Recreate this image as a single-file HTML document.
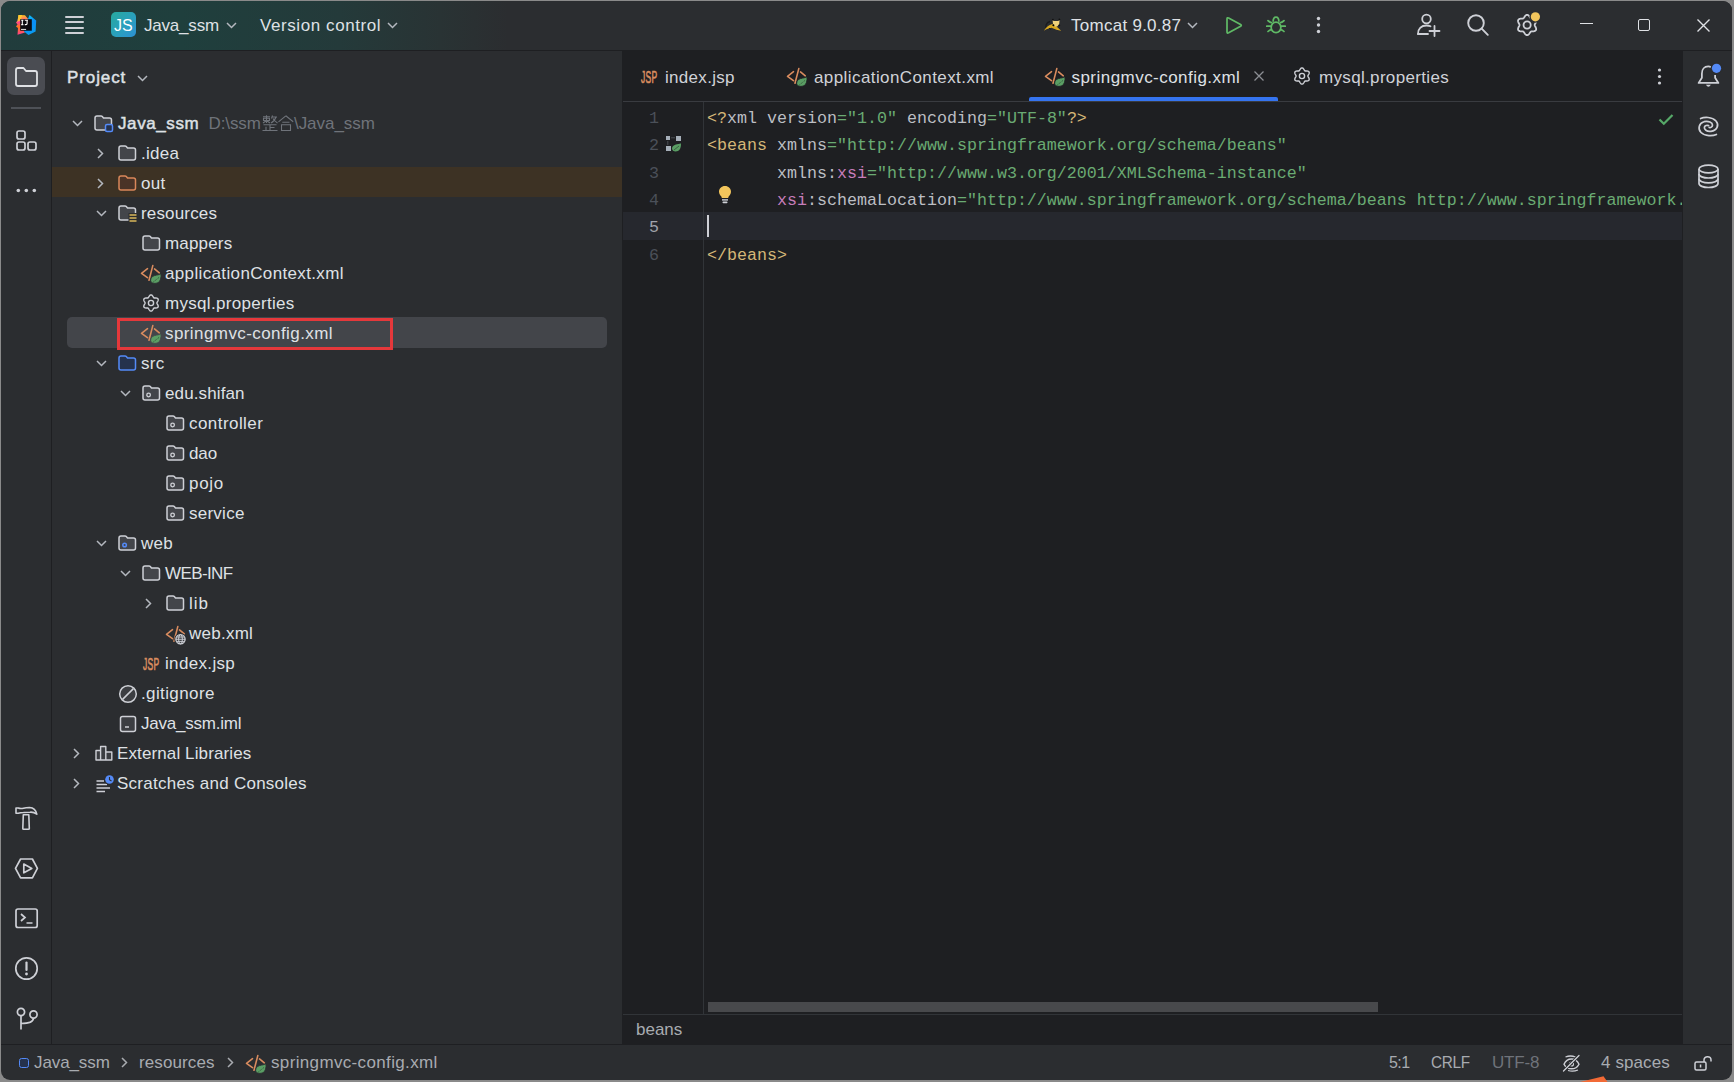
<!DOCTYPE html>
<html><head><meta charset="utf-8">
<style>
*{box-sizing:border-box;margin:0;padding:0}
html,body{width:1734px;height:1082px;overflow:hidden;background:#8a8a8a;font-family:"Liberation Sans",sans-serif;position:relative}
#win{position:absolute;left:0;top:0;width:1734px;height:1082px;background:#2B2D30;clip-path:inset(1px 2px 2px 1px round 9px)}
.r{position:absolute}
.t{position:absolute;white-space:nowrap;color:#DFE1E5;font-size:17px;line-height:20px}
.b{-webkit-text-stroke:0.45px #DFE1E5}
.mono{font-family:"Liberation Mono",monospace}
svg{position:absolute;overflow:visible}
</style></head><body>
<div id="win">
<div class="r" style="left:0;top:0;width:1734px;height:51px;background:linear-gradient(90deg,#213c3c 0px,#1f3f3d 180px,#243a3a 340px,#293334 440px,#2B2D30 508px)"></div>
<div class="r" style="left:0;top:50px;width:1734px;height:1px;background:#1E1F22"></div>
<!-- IJ logo -->
<svg style="left:0;top:0" width="50" height="50">
  <defs>
    <linearGradient id="ijw" x1="0" y1="0" x2="0" y2="1"><stop offset="0" stop-color="#FFC51E"/><stop offset="0.35" stop-color="#FF3C9A"/><stop offset="0.6" stop-color="#FF7A1A"/><stop offset="1" stop-color="#FF3C8C"/></linearGradient>
    <linearGradient id="ijc" x1="0" y1="0" x2="0.3" y2="1"><stop offset="0" stop-color="#10D5F5"/><stop offset="0.5" stop-color="#0A8EF7"/><stop offset="1" stop-color="#0A9BF2"/></linearGradient>
  </defs>
  <polygon points="18.5,15 25,15.2 28.5,19.5 24,31 25,32.5 17.5,34.8 18,28 16,26.5 17.5,24.5 16,22.5 17.5,21" fill="url(#ijw)"/>
  <polygon points="18.5,15 22,15.1 21,20 16,22.5 17.5,21" fill="#FFD030" opacity="0.85"/>
  <polygon points="29.5,15 36.2,20.5 35.6,31.5 28.5,35 24,31.5 28,19" fill="url(#ijc)"/>
  <rect x="20.2" y="19.2" width="11.6" height="11.5" fill="#0B0A10"/>
  <path d="M21.2,20.3 L23.4,20.3 M22.3,20.3 L22.3,24.6 M21.2,24.6 L23.4,24.6 M24.8,20.3 L27.9,20.3 M27.1,20.3 L27.1,23.6 Q27.1,24.6 26,24.6 L24.8,24.6" fill="none" stroke="#FFFFFF" stroke-width="1.1"/>
  <rect x="21" y="28.9" width="5.1" height="1" fill="#E8E8E8"/>
</svg>
<!-- hamburger -->
<div class="r" style="left:65px;top:16px;width:19px;height:2px;background:#CED0D6;border-radius:1px"></div>
<div class="r" style="left:65px;top:21px;width:19px;height:2px;background:#CED0D6;border-radius:1px"></div>
<div class="r" style="left:65px;top:27px;width:19px;height:2px;background:#CED0D6;border-radius:1px"></div>
<div class="r" style="left:65px;top:32px;width:19px;height:2px;background:#CED0D6;border-radius:1px"></div>
<!-- JS badge -->
<div class="r" style="left:111px;top:12px;width:25px;height:25px;border-radius:5px;background:linear-gradient(135deg,#27A99E 0%,#2A9FC0 60%,#2D8FD5 100%)"></div>
<div class="t" style="left:114px;top:16px;font-size:16px;color:#fff;letter-spacing:0px">JS</div>
<div class="t" style="left:144px;top:16px;letter-spacing:-0.2px">Java_ssm</div>
<svg style="left:226px;top:22px" width="11" height="7"><polyline points="1,1 5.5,5.5 10,1" fill="none" stroke="#B4B8BF" stroke-width="1.5"/></svg>
<div class="t" style="left:260px;top:16px;letter-spacing:0.58px">Version control</div>
<svg style="left:387px;top:22px" width="11" height="7"><polyline points="1,1 5.5,5.5 10,1" fill="none" stroke="#B4B8BF" stroke-width="1.5"/></svg>
<!-- tomcat -->
<svg style="left:1038px;top:12px" width="30" height="26">
  <path d="M8.5,17.5 C7,14.5 8,10.5 12,9.5" fill="none" stroke="#1A1B1E" stroke-width="1.3"/>
  <path d="M5.8,18.8 C8,15.5 10.5,13 14.5,12 L17.5,13.5 C19.5,15.5 21.5,17 23.2,18.8 C20,18.5 17,17.3 13.5,15.8 C10.5,16.3 8,17.3 5.8,18.8 Z" fill="#D9A820"/>
  <path d="M11,16.2 L13,17.5" stroke="#1A1B1E" stroke-width="1"/>
  <path d="M14.6,8 L15.8,9 L20.3,9 L21.6,7.8 L21.2,12.3 L19.2,14.6 L17.2,14.6 L15,12.3 Z" fill="#EFD27A"/>
  <circle cx="14.9" cy="7.6" r="0.9" fill="#111"/><circle cx="21.4" cy="7.4" r="0.9" fill="#111"/>
  <circle cx="15.4" cy="13.2" r="1" fill="#000"/><circle cx="21.3" cy="13.4" r="0.9" fill="#111"/>
</svg>
<div class="t" style="left:1071px;top:16px;letter-spacing:0.27px">Tomcat 9.0.87</div>
<svg style="left:1187px;top:22px" width="11" height="7"><polyline points="1,1 5.5,5.5 10,1" fill="none" stroke="#B4B8BF" stroke-width="1.5"/></svg>
<!-- run -->
<svg style="left:1225px;top:16px" width="20" height="20"><path d="M2,3 Q2,1.2 3.6,2 L15.6,8.6 Q17,9.4 15.6,10.2 L3.6,16.8 Q2,17.6 2,15.8 Z" fill="none" stroke="#5FB865" stroke-width="1.75" stroke-linejoin="round"/></svg>
<!-- debug bug -->
<svg style="left:1266px;top:16px" width="20" height="18">
  <path d="M7.1,5.8 C7.1,2.6 8.4,1 10,1 C11.6,1 12.9,2.6 12.9,5.8" fill="none" stroke="#5FB865" stroke-width="1.75"/>
  <ellipse cx="10" cy="11.4" rx="4.85" ry="5.25" fill="none" stroke="#5FB865" stroke-width="1.75"/>
  <path d="M2,4.7 Q3.5,6.2 5.4,6.6 M18,4.7 Q16.5,6.2 14.6,6.6 M0.8,10.2 L5,10.2 M19.2,10.2 L15,10.2 M2,15.5 Q3.5,14 5.4,13.6 M18,15.5 Q16.5,14 14.6,13.6" fill="none" stroke="#5FB865" stroke-width="1.75" stroke-linecap="round"/>
</svg>
<!-- more -->
<svg style="left:1316px;top:16px" width="5" height="18"><circle cx="2.5" cy="2.5" r="1.7" fill="#CED0D6"/><circle cx="2.5" cy="9" r="1.7" fill="#CED0D6"/><circle cx="2.5" cy="15.5" r="1.7" fill="#CED0D6"/></svg>
<!-- add user -->
<svg style="left:1417px;top:13px" width="24" height="24">
  <circle cx="9.5" cy="6" r="4.3" fill="none" stroke="#CED0D6" stroke-width="1.8"/>
  <path d="M1,21 C1,15.5 4.5,12.5 9.5,12.5 C11,12.5 12.5,12.8 13.5,13.3" fill="none" stroke="#CED0D6" stroke-width="1.8" stroke-linecap="round"/>
  <path d="M1,21 L11,21" stroke="#CED0D6" stroke-width="1.8" stroke-linecap="round"/>
  <path d="M17.5,13 L17.5,23 M12.5,18 L22.5,18" stroke="#CED0D6" stroke-width="1.8" stroke-linecap="round"/>
</svg>
<!-- search -->
<svg style="left:1467px;top:14px" width="22" height="22">
  <circle cx="9" cy="9" r="7.8" fill="none" stroke="#CED0D6" stroke-width="1.9"/>
  <path d="M14.7,14.7 L20.8,20.8" stroke="#CED0D6" stroke-width="1.9" stroke-linecap="round"/>
</svg>
<!-- gear w/ dot -->
<svg style="left:1515px;top:13px" width="26" height="26">
  <path d="M19.70,12.00 L19.79,12.54 L20.05,13.12 L20.41,13.77 L20.79,14.49 L21.07,15.27 L21.19,16.05 L21.08,16.78 L20.73,17.39 L20.15,17.85 L19.42,18.14 L18.60,18.28 L17.79,18.32 L17.04,18.33 L16.41,18.39 L15.90,18.58 L15.48,18.93 L15.11,19.45 L14.73,20.08 L14.29,20.77 L13.76,21.40 L13.14,21.90 L12.45,22.17 L11.75,22.17 L11.06,21.90 L10.44,21.40 L9.91,20.77 L9.47,20.08 L9.09,19.45 L8.72,18.93 L8.30,18.58 L7.79,18.39 L7.16,18.33 L6.41,18.32 L5.60,18.28 L4.78,18.14 L4.05,17.85 L3.47,17.39 L3.12,16.78 L3.01,16.05 L3.13,15.27 L3.41,14.49 L3.79,13.77 L4.15,13.12 L4.41,12.54 L4.50,12.00 L4.41,11.46 L4.15,10.88 L3.79,10.23 L3.41,9.51 L3.13,8.73 L3.01,7.95 L3.12,7.22 L3.47,6.61 L4.05,6.15 L4.78,5.86 L5.60,5.72 L6.41,5.68 L7.16,5.67 L7.79,5.61 L8.30,5.42 L8.72,5.07 L9.09,4.55 L9.47,3.92 L9.91,3.23 L10.44,2.60 L11.06,2.10 L11.75,1.83 L12.45,1.83 L13.14,2.10 L13.76,2.60 L14.29,3.23 L14.73,3.92 L15.11,4.55 L15.48,5.07 L15.90,5.42 L16.41,5.61 L17.04,5.67 L17.79,5.68 L18.60,5.72 L19.42,5.86 L20.15,6.15 L20.73,6.61 L21.08,7.22 L21.19,7.95 L21.07,8.73 L20.79,9.51 L20.41,10.23 L20.05,10.88 L19.79,11.46 Z" fill="none" stroke="#CED0D6" stroke-width="1.8" stroke-linejoin="round"/>
  <circle cx="12.1" cy="12" r="3.6" fill="none" stroke="#CED0D6" stroke-width="1.8"/>
  <circle cx="20.4" cy="3.8" r="6" fill="#2B2D30"/>
  <circle cx="20.4" cy="3.8" r="4.6" fill="#F2C55C"/>
</svg>
<!-- window controls -->
<div class="r" style="left:1580px;top:23px;width:13px;height:1.2px;background:#DFE1E5"></div>
<div class="r" style="left:1638px;top:19px;width:12px;height:12px;border:1.4px solid #DFE1E5;border-radius:2px"></div>
<svg style="left:1697px;top:19px" width="13" height="13"><path d="M0.5,0.5 L12.5,12.5 M12.5,0.5 L0.5,12.5" stroke="#DFE1E5" stroke-width="1.4"/></svg>



<div class="r" style="left:51px;top:51px;width:1px;height:993px;background:#1E1F22"></div>
<!-- project button -->
<div class="r" style="left:7px;top:57px;width:38px;height:38px;border-radius:7px;background:#4A4C52"></div>
<svg style="left:15px;top:67px" width="24" height="20"><path d="M1,3 Q1,1 3,1 L8.5,1 L11,4 L20,4 Q22,4 22,6 L22,17 Q22,19 20,19 L3,19 Q1,19 1,17 Z" fill="none" stroke="#DFE1E5" stroke-width="1.8" stroke-linejoin="round"/></svg>
<div class="r" style="left:11px;top:107px;width:30px;height:2px;background:#4E5157"></div>
<!-- structure -->
<svg style="left:16px;top:130px" width="22" height="22">
  <rect x="1" y="1" width="8" height="8" rx="2" fill="none" stroke="#CED0D6" stroke-width="1.7"/>
  <rect x="1" y="12" width="8" height="8" rx="2" fill="none" stroke="#CED0D6" stroke-width="1.7"/>
  <rect x="12" y="12" width="8" height="8" rx="2" fill="none" stroke="#CED0D6" stroke-width="1.7"/>
</svg>
<svg style="left:16px;top:187px" width="22" height="8"><circle cx="2.3" cy="3.5" r="1.8" fill="#CED0D6"/><circle cx="10.3" cy="3.5" r="1.8" fill="#CED0D6"/><circle cx="18.3" cy="3.5" r="1.8" fill="#CED0D6"/></svg>
<!-- hammer -->
<svg style="left:14px;top:806px" width="25" height="25">
  <path d="M2,2 L4.3,2 Q6.5,3 9.5,2.2 Q12,1.5 15.5,1.5 Q21.5,1.8 22.8,8.2 Q19.5,5.8 16,6.2 L9.5,6.5 Q6.5,6.5 4.3,7.3 L2,7.3 Z" fill="none" stroke="#CED0D6" stroke-width="1.6" stroke-linejoin="round"/>
  <path d="M9.3,8.8 L14.8,8.8 L15.3,22.5 Q15.3,23.3 14.5,23.3 L9.6,23.3 Q8.8,23.3 8.8,22.5 Z" fill="none" stroke="#CED0D6" stroke-width="1.6" stroke-linejoin="round"/>
</svg>
<!-- run hex -->
<svg style="left:14px;top:851px" width="26" height="30">
  <path d="M6.6,8 L18.4,8 L23.4,17.4 L18.4,26.8 L6.6,26.8 L1.5,17.4 Z" fill="none" stroke="#CED0D6" stroke-width="1.7" stroke-linejoin="round"/>
  <path d="M9.8,13 L17.8,17.4 L9.8,21.8 Z" fill="none" stroke="#CED0D6" stroke-width="1.7" stroke-linejoin="round"/>
</svg>
<!-- terminal -->
<svg style="left:15px;top:908px" width="25" height="22">
  <rect x="1" y="1" width="21.2" height="18.5" rx="2" fill="none" stroke="#CED0D6" stroke-width="1.7"/>
  <path d="M6,6 L10,9.5 L6,13 M11.5,15 L17.5,15" fill="none" stroke="#CED0D6" stroke-width="1.7"/>
</svg>
<!-- problems -->
<svg style="left:14px;top:957px" width="25" height="24">
  <circle cx="12.5" cy="11.5" r="10.7" fill="none" stroke="#CED0D6" stroke-width="1.7"/>
  <path d="M12.5,5.5 L12.5,13" stroke="#CED0D6" stroke-width="2.2" stroke-linecap="round"/>
  <circle cx="12.5" cy="17" r="1.4" fill="#CED0D6"/>
</svg>
<!-- git -->
<svg style="left:16px;top:1007px" width="24" height="24">
  <circle cx="5" cy="5" r="3.6" fill="none" stroke="#CED0D6" stroke-width="1.7"/>
  <circle cx="17.5" cy="7.5" r="3.6" fill="none" stroke="#CED0D6" stroke-width="1.7"/>
  <path d="M5,8.6 L5,22.5 M5,16.5 Q17.5,16.5 17.5,11.1" fill="none" stroke="#CED0D6" stroke-width="1.7"/>
</svg>



<div class="t b" style="left:67px;top:68px;letter-spacing:0.9px">Project</div>
<svg style="left:137px;top:75px" width="11" height="7"><polyline points="1,1 5.5,5.5 10,1" fill="none" stroke="#B4B8BF" stroke-width="1.5"/></svg>
<div class="r" style="left:52px;top:167px;width:570px;height:30px;background:#3D3224"></div>
<div class="r" style="left:67px;top:317px;width:540px;height:31px;border-radius:5px;background:#43454A"></div>
<svg style="left:72px;top:120px" width="11" height="7"><polyline points="1,1 5.5,5.5 10,1" fill="none" stroke="#B4B8BF" stroke-width="1.5"/></svg>
<svg style="left:94px;top:114px" width="20" height="20"><path d="M1,4 Q1,2 3,2 L7,2 Q7.8,2 8.3,2.6 L9.5,4 L15.5,4 Q17.5,4 17.5,6 L17.5,14 Q17.5,16 15.5,16 L3,16 Q1,16 1,14 Z" fill="#43454A" stroke="#CED0D6" stroke-width="1.5" stroke-linejoin="round"/><rect x="11.5" y="10.5" width="7" height="7" rx="1.5" fill="#25324D" stroke="#548AF7" stroke-width="1.5"/></svg>
<div class="t b" style="left:118px;top:114px;letter-spacing:0.6px">Java_ssm</div>
<div class="t" style="left:208.5px;top:114px;color:#6F737A;letter-spacing:-0.1px">D:\ssm</div>
<svg style="left:262px;top:115px" width="34" height="17"><g fill="none" stroke="#6F737A" stroke-width="1.1"><path d="M1,1.8 L8,1.8 M4.5,0.3 L4.5,8 M1.5,3.2 L7.5,3.2 L7.5,5.5 L1.5,5.5 Z M4.5,5.5 L1,8 M4.5,5.5 L8,8 M10.5,0.5 L9.5,3.5 M10,2 L15,2 M14,2 Q12.5,6.3 9,8 M11,3.5 Q13,6.5 15.5,8 M1.5,9.8 L14.5,9.8 M8,9.8 L8,15.5 M8,12.5 L12.5,12.5 M4,11.8 L4,15.5 M0.5,15.5 L15.5,15.5"/><path d="M23.8,0.8 L16.5,6.8 M23.8,0.8 L31.2,6.8 M20.3,7.3 L27.5,7.3 M19.5,9.8 L28.5,9.8 L28.5,15.5 L19.5,15.5 Z"/></g></svg>
<div class="t" style="left:294px;top:114px;color:#6F737A;letter-spacing:-0.05px">\Java_ssm</div>
<svg style="left:97px;top:148px" width="7" height="11"><polyline points="1,1 5.5,5.5 1,10" fill="none" stroke="#B4B8BF" stroke-width="1.5"/></svg>
<svg style="left:118px;top:144px" width="20" height="20"><path d="M1,4 Q1,2 3,2 L7,2 Q7.8,2 8.3,2.6 L9.5,4 L15.5,4 Q17.5,4 17.5,6 L17.5,14 Q17.5,16 15.5,16 L3,16 Q1,16 1,14 Z" fill="#43454A" stroke="#CED0D6" stroke-width="1.5" stroke-linejoin="round"/></svg>
<div class="t" style="left:141px;top:144px;letter-spacing:0.25px">.idea</div>
<svg style="left:97px;top:178px" width="7" height="11"><polyline points="1,1 5.5,5.5 1,10" fill="none" stroke="#B4B8BF" stroke-width="1.5"/></svg>
<svg style="left:118px;top:174px" width="20" height="20"><path d="M1,4 Q1,2 3,2 L7,2 Q7.8,2 8.3,2.6 L9.5,4 L15.5,4 Q17.5,4 17.5,6 L17.5,14 Q17.5,16 15.5,16 L3,16 Q1,16 1,14 Z" fill="#4A3327" stroke="#D9875A" stroke-width="1.5" stroke-linejoin="round"/></svg>
<div class="t" style="left:141px;top:174px;letter-spacing:0.25px">out</div>
<svg style="left:96px;top:210px" width="11" height="7"><polyline points="1,1 5.5,5.5 10,1" fill="none" stroke="#B4B8BF" stroke-width="1.5"/></svg>
<svg style="left:118px;top:204px" width="20" height="20"><path d="M1,4 Q1,2 3,2 L7,2 Q7.8,2 8.3,2.6 L9.5,4 L15.5,4 Q17.5,4 17.5,6 L17.5,14 Q17.5,16 15.5,16 L3,16 Q1,16 1,14 Z" fill="#43454A" stroke="#CED0D6" stroke-width="1.5" stroke-linejoin="round"/><rect x="10.5" y="9" width="9" height="9" fill="#2B2D30"/><path d="M11.5,11 L18.5,11 M11.5,14 L18.5,14 M11.5,17 L18.5,17" stroke="#D9B659" stroke-width="1.5"/></svg>
<div class="t" style="left:141px;top:204px;letter-spacing:0.163px">resources</div>
<svg style="left:142px;top:234px" width="20" height="20"><path d="M1,4 Q1,2 3,2 L7,2 Q7.8,2 8.3,2.6 L9.5,4 L15.5,4 Q17.5,4 17.5,6 L17.5,14 Q17.5,16 15.5,16 L3,16 Q1,16 1,14 Z" fill="#43454A" stroke="#CED0D6" stroke-width="1.5" stroke-linejoin="round"/></svg>
<div class="t" style="left:165px;top:234px;letter-spacing:0.167px">mappers</div>
<svg style="left:140px;top:265px" width="22" height="20"><path d="M7.5,3.7 L1.5,8.3 L7.5,12.6 M12.8,0.6 L9,15.3 M14.5,3.9 L19.3,7.8" fill="none" stroke="#D98C5F" stroke-width="1.6" stroke-linecap="round" stroke-linejoin="round"/><path d="M10.6,15.2 C10.6,11.8 13.5,10.6 16.5,10.1 C18.6,9.8 20.2,9.2 21,8.8 C21.3,12.5 20.6,16.4 18,17.7 C15.3,18.9 10.6,18.6 10.6,15.2 Z" fill="#5A9E64" stroke="#2B2D30" stroke-width="0.9"/><path d="M13.3,17 L19.2,12.3" stroke="#2E4A33" stroke-width="0.8" stroke-dasharray="1.2,0.8"/></svg>
<div class="t" style="left:165px;top:264px;letter-spacing:0.355px">applicationContext.xml</div>
<svg style="left:140px;top:292px" width="22" height="22"><path d="M16.90,11.00 L16.98,11.42 L17.20,11.87 L17.51,12.38 L17.84,12.96 L18.09,13.58 L18.21,14.21 L18.13,14.79 L17.85,15.28 L17.38,15.64 L16.78,15.85 L16.12,15.94 L15.46,15.95 L14.86,15.94 L14.35,15.97 L13.95,16.11 L13.63,16.39 L13.35,16.81 L13.06,17.33 L12.72,17.90 L12.31,18.44 L11.82,18.85 L11.28,19.07 L10.72,19.07 L10.18,18.85 L9.69,18.44 L9.28,17.90 L8.94,17.33 L8.65,16.81 L8.37,16.39 L8.05,16.11 L7.65,15.97 L7.14,15.94 L6.54,15.95 L5.88,15.94 L5.22,15.85 L4.62,15.64 L4.15,15.28 L3.87,14.79 L3.79,14.21 L3.91,13.58 L4.16,12.96 L4.49,12.38 L4.80,11.87 L5.02,11.42 L5.10,11.00 L5.02,10.58 L4.80,10.13 L4.49,9.62 L4.16,9.04 L3.91,8.42 L3.79,7.79 L3.87,7.21 L4.15,6.72 L4.62,6.36 L5.22,6.15 L5.88,6.06 L6.54,6.05 L7.14,6.06 L7.65,6.03 L8.05,5.89 L8.37,5.61 L8.65,5.19 L8.94,4.67 L9.28,4.10 L9.69,3.56 L10.18,3.15 L10.72,2.93 L11.28,2.93 L11.82,3.15 L12.31,3.56 L12.72,4.10 L13.06,4.67 L13.35,5.19 L13.63,5.61 L13.95,5.89 L14.35,6.03 L14.86,6.06 L15.46,6.05 L16.12,6.06 L16.78,6.15 L17.38,6.36 L17.85,6.72 L18.13,7.21 L18.21,7.79 L18.09,8.42 L17.84,9.04 L17.51,9.62 L17.20,10.13 L16.98,10.58 Z" fill="none" stroke="#CED0D6" stroke-width="1.4" stroke-linejoin="round"/><circle cx="11" cy="11" r="2.6" fill="none" stroke="#CED0D6" stroke-width="1.4"/></svg>
<div class="t" style="left:165px;top:294px;letter-spacing:0.31px">mysql.properties</div>
<svg style="left:140px;top:325px" width="22" height="20"><path d="M7.5,3.7 L1.5,8.3 L7.5,12.6 M12.8,0.6 L9,15.3 M14.5,3.9 L19.3,7.8" fill="none" stroke="#D98C5F" stroke-width="1.6" stroke-linecap="round" stroke-linejoin="round"/><path d="M10.6,15.2 C10.6,11.8 13.5,10.6 16.5,10.1 C18.6,9.8 20.2,9.2 21,8.8 C21.3,12.5 20.6,16.4 18,17.7 C15.3,18.9 10.6,18.6 10.6,15.2 Z" fill="#5A9E64" stroke="#43454A" stroke-width="0.9"/><path d="M13.3,17 L19.2,12.3" stroke="#2E4A33" stroke-width="0.8" stroke-dasharray="1.2,0.8"/></svg>
<div class="t" style="left:165px;top:324px;letter-spacing:0.418px">springmvc-config.xml</div>
<svg style="left:96px;top:360px" width="11" height="7"><polyline points="1,1 5.5,5.5 10,1" fill="none" stroke="#B4B8BF" stroke-width="1.5"/></svg>
<svg style="left:118px;top:354px" width="20" height="20"><path d="M1,4 Q1,2 3,2 L7,2 Q7.8,2 8.3,2.6 L9.5,4 L15.5,4 Q17.5,4 17.5,6 L17.5,14 Q17.5,16 15.5,16 L3,16 Q1,16 1,14 Z" fill="#25324D" stroke="#548AF7" stroke-width="1.5" stroke-linejoin="round"/></svg>
<div class="t" style="left:141px;top:354px;letter-spacing:0.25px">src</div>
<svg style="left:120px;top:390px" width="11" height="7"><polyline points="1,1 5.5,5.5 10,1" fill="none" stroke="#B4B8BF" stroke-width="1.5"/></svg>
<svg style="left:142px;top:384px" width="20" height="20"><path d="M1,4 Q1,2 3,2 L7,2 Q7.8,2 8.3,2.6 L9.5,4 L15.5,4 Q17.5,4 17.5,6 L17.5,14 Q17.5,16 15.5,16 L3,16 Q1,16 1,14 Z" fill="#43454A" stroke="#CED0D6" stroke-width="1.5" stroke-linejoin="round"/><circle cx="6.6" cy="11" r="1.8" fill="none" stroke="#CED0D6" stroke-width="1.3"/></svg>
<div class="t" style="left:165px;top:384px;letter-spacing:0.117px">edu.shifan</div>
<svg style="left:166px;top:414px" width="20" height="20"><path d="M1,4 Q1,2 3,2 L7,2 Q7.8,2 8.3,2.6 L9.5,4 L15.5,4 Q17.5,4 17.5,6 L17.5,14 Q17.5,16 15.5,16 L3,16 Q1,16 1,14 Z" fill="#43454A" stroke="#CED0D6" stroke-width="1.5" stroke-linejoin="round"/><circle cx="6.6" cy="11" r="1.8" fill="none" stroke="#CED0D6" stroke-width="1.3"/></svg>
<div class="t" style="left:189px;top:414px;letter-spacing:0.439px">controller</div>
<svg style="left:166px;top:444px" width="20" height="20"><path d="M1,4 Q1,2 3,2 L7,2 Q7.8,2 8.3,2.6 L9.5,4 L15.5,4 Q17.5,4 17.5,6 L17.5,14 Q17.5,16 15.5,16 L3,16 Q1,16 1,14 Z" fill="#43454A" stroke="#CED0D6" stroke-width="1.5" stroke-linejoin="round"/><circle cx="6.6" cy="11" r="1.8" fill="none" stroke="#CED0D6" stroke-width="1.3"/></svg>
<div class="t" style="left:189px;top:444px;letter-spacing:-0.1px">dao</div>
<svg style="left:166px;top:474px" width="20" height="20"><path d="M1,4 Q1,2 3,2 L7,2 Q7.8,2 8.3,2.6 L9.5,4 L15.5,4 Q17.5,4 17.5,6 L17.5,14 Q17.5,16 15.5,16 L3,16 Q1,16 1,14 Z" fill="#43454A" stroke="#CED0D6" stroke-width="1.5" stroke-linejoin="round"/><circle cx="6.6" cy="11" r="1.8" fill="none" stroke="#CED0D6" stroke-width="1.3"/></svg>
<div class="t" style="left:189px;top:474px;letter-spacing:0.717px">pojo</div>
<svg style="left:166px;top:504px" width="20" height="20"><path d="M1,4 Q1,2 3,2 L7,2 Q7.8,2 8.3,2.6 L9.5,4 L15.5,4 Q17.5,4 17.5,6 L17.5,14 Q17.5,16 15.5,16 L3,16 Q1,16 1,14 Z" fill="#43454A" stroke="#CED0D6" stroke-width="1.5" stroke-linejoin="round"/><circle cx="6.6" cy="11" r="1.8" fill="none" stroke="#CED0D6" stroke-width="1.3"/></svg>
<div class="t" style="left:189px;top:504px;letter-spacing:0.25px">service</div>
<svg style="left:96px;top:540px" width="11" height="7"><polyline points="1,1 5.5,5.5 10,1" fill="none" stroke="#B4B8BF" stroke-width="1.5"/></svg>
<svg style="left:118px;top:534px" width="20" height="20"><path d="M1,4 Q1,2 3,2 L7,2 Q7.8,2 8.3,2.6 L9.5,4 L15.5,4 Q17.5,4 17.5,6 L17.5,14 Q17.5,16 15.5,16 L3,16 Q1,16 1,14 Z" fill="#43454A" stroke="#CED0D6" stroke-width="1.5" stroke-linejoin="round"/><circle cx="6.6" cy="11" r="1.8" fill="none" stroke="#548AF7" stroke-width="1.5"/></svg>
<div class="t" style="left:141px;top:534px;letter-spacing:0.25px">web</div>
<svg style="left:120px;top:570px" width="11" height="7"><polyline points="1,1 5.5,5.5 10,1" fill="none" stroke="#B4B8BF" stroke-width="1.5"/></svg>
<svg style="left:142px;top:564px" width="20" height="20"><path d="M1,4 Q1,2 3,2 L7,2 Q7.8,2 8.3,2.6 L9.5,4 L15.5,4 Q17.5,4 17.5,6 L17.5,14 Q17.5,16 15.5,16 L3,16 Q1,16 1,14 Z" fill="#43454A" stroke="#CED0D6" stroke-width="1.5" stroke-linejoin="round"/></svg>
<div class="t" style="left:165px;top:564px;letter-spacing:-0.6px">WEB-INF</div>
<svg style="left:145px;top:598px" width="7" height="11"><polyline points="1,1 5.5,5.5 1,10" fill="none" stroke="#B4B8BF" stroke-width="1.5"/></svg>
<svg style="left:166px;top:594px" width="20" height="20"><path d="M1,4 Q1,2 3,2 L7,2 Q7.8,2 8.3,2.6 L9.5,4 L15.5,4 Q17.5,4 17.5,6 L17.5,14 Q17.5,16 15.5,16 L3,16 Q1,16 1,14 Z" fill="#43454A" stroke="#CED0D6" stroke-width="1.5" stroke-linejoin="round"/></svg>
<div class="t" style="left:189px;top:594px;letter-spacing:0.95px">lib</div>
<svg style="left:164.5px;top:625.5px" width="20" height="20"><path d="M7.5,3.7 L1.5,8.3 L7.5,12.6 M12.8,0.6 L9,15.3 M14.5,3.9 L19.3,7.8" fill="none" stroke="#D98C5F" stroke-width="1.6" stroke-linecap="round" stroke-linejoin="round"/><circle cx="15.5" cy="13.3" r="5.6" fill="#3C3E42" stroke="#2B2D30" stroke-width="1.2"/><circle cx="15.5" cy="13.3" r="4.6" fill="none" stroke="#CED0D6" stroke-width="1.3"/><path d="M11,13.3 L20,13.3 M11.8,11 L19.2,11 M11.8,15.6 L19.2,15.6" stroke="#CED0D6" stroke-width="0.9"/><ellipse cx="15.5" cy="13.3" rx="1.9" ry="4.6" fill="none" stroke="#CED0D6" stroke-width="1"/></svg>
<div class="t" style="left:189px;top:624px;letter-spacing:0.25px">web.xml</div>
<svg style="left:142.5px;top:658px" width="16" height="13"><text x="0" y="11.5" font-family="Liberation Sans" font-size="16" fill="#D98C5F" stroke="#D98C5F" stroke-width="0.7" transform="scale(0.53,1)" letter-spacing="0.5">JSP</text></svg>
<div class="t" style="left:165px;top:654px;letter-spacing:0.338px">index.jsp</div>
<svg style="left:118px;top:684px" width="20" height="20"><circle cx="10" cy="10" r="8.3" fill="#3C3E42" stroke="#CED0D6" stroke-width="1.5"/><path d="M4.6,15.4 L15.4,4.6" stroke="#CED0D6" stroke-width="1.5"/></svg>
<div class="t" style="left:141px;top:684px;letter-spacing:0.383px">.gitignore</div>
<svg style="left:118px;top:714px" width="20" height="20"><rect x="2.5" y="2.5" width="15" height="15" rx="2" fill="#3C3E42" stroke="#CED0D6" stroke-width="1.5"/><path d="M7,13 L11,13" stroke="#CED0D6" stroke-width="1.5"/></svg>
<div class="t" style="left:141px;top:714px;letter-spacing:-0.223px">Java_ssm.iml</div>
<svg style="left:73px;top:748px" width="7" height="11"><polyline points="1,1 5.5,5.5 1,10" fill="none" stroke="#B4B8BF" stroke-width="1.5"/></svg>
<svg style="left:94px;top:744px" width="20" height="20"><path d="M2,6.5 L6.6,6.5 L6.6,16 L2,16 Z M6.6,2.5 L11.8,2.5 L11.8,16 L6.6,16 Z M11.8,8 L17.8,8 L17.8,16 L11.8,16 Z" fill="#3C3E42" stroke="#CED0D6" stroke-width="1.4" stroke-linejoin="round"/></svg>
<div class="t" style="left:117px;top:744px;letter-spacing:0.115px">External Libraries</div>
<svg style="left:73px;top:778px" width="7" height="11"><polyline points="1,1 5.5,5.5 1,10" fill="none" stroke="#B4B8BF" stroke-width="1.5"/></svg>
<svg style="left:94px;top:774px" width="20" height="20"><path d="M2.5,7 L10,7 M2.5,10.5 L13,10.5 M2.5,14 L16,14 M2.5,17.5 L11,17.5" stroke="#CED0D6" stroke-width="1.4"/><circle cx="15.5" cy="5.5" r="5.3" fill="#2B2D30"/><circle cx="15.5" cy="5.5" r="4.3" fill="#548AF7"/><path d="M15.5,3 L15.5,5.8 L17.5,7" stroke="#2B2D30" stroke-width="1.1" fill="none"/></svg>
<div class="t" style="left:117px;top:774px;letter-spacing:0.25px">Scratches and Consoles</div>
<div class="r" style="left:117px;top:318px;width:276px;height:32px;border:3px solid #E5383B"></div>
<div class="r" style="left:622px;top:51px;width:1061px;height:993px;background:#1E1F22"></div>
<div class="r" style="left:623px;top:101px;width:1059px;height:1px;background:#393B40"></div>
<svg style="left:641px;top:71px" width="16" height="13"><text x="0" y="11.5" font-family="Liberation Sans" font-size="16" fill="#D98C5F" stroke="#D98C5F" stroke-width="0.7" transform="scale(0.53,1)" letter-spacing="0.5">JSP</text></svg>
<div class="t" style="left:665px;top:68px;letter-spacing:0.3px;color:#D0D2D7">index.jsp</div>
<svg style="left:786px;top:67.5px" width="22" height="20"><path d="M7.5,3.7 L1.5,8.3 L7.5,12.6 M12.8,0.6 L9,15.3 M14.5,3.9 L19.3,7.8" fill="none" stroke="#D98C5F" stroke-width="1.6" stroke-linecap="round" stroke-linejoin="round"/><path d="M10.6,15.2 C10.6,11.8 13.5,10.6 16.5,10.1 C18.6,9.8 20.2,9.2 21,8.8 C21.3,12.5 20.6,16.4 18,17.7 C15.3,18.9 10.6,18.6 10.6,15.2 Z" fill="#5A9E64" stroke="#1E1F22" stroke-width="0.9"/><path d="M13.3,17 L19.2,12.3" stroke="#2E4A33" stroke-width="0.8" stroke-dasharray="1.2,0.8"/></svg>
<div class="t" style="left:814px;top:68px;letter-spacing:0.41px;color:#D0D2D7">applicationContext.xml</div>
<svg style="left:1044px;top:67.5px" width="22" height="20"><path d="M7.5,3.7 L1.5,8.3 L7.5,12.6 M12.8,0.6 L9,15.3 M14.5,3.9 L19.3,7.8" fill="none" stroke="#D98C5F" stroke-width="1.6" stroke-linecap="round" stroke-linejoin="round"/><path d="M10.6,15.2 C10.6,11.8 13.5,10.6 16.5,10.1 C18.6,9.8 20.2,9.2 21,8.8 C21.3,12.5 20.6,16.4 18,17.7 C15.3,18.9 10.6,18.6 10.6,15.2 Z" fill="#5A9E64" stroke="#1E1F22" stroke-width="0.9"/><path d="M13.3,17 L19.2,12.3" stroke="#2E4A33" stroke-width="0.8" stroke-dasharray="1.2,0.8"/></svg>
<div class="t" style="left:1071.5px;top:68px;letter-spacing:0.46px">springmvc-config.xml</div>
<svg style="left:1254px;top:71px" width="10" height="10"><path d="M0.5,0.5 L9.5,9.5 M9.5,0.5 L0.5,9.5" stroke="#8C8F94" stroke-width="1.3"/></svg>
<div class="r" style="left:1029px;top:97px;width:249px;height:4px;background:#3574F0;border-radius:2px 2px 0 0"></div>
<svg style="left:1291.1px;top:65.3px" width="22" height="22"><path d="M16.90,11.00 L16.98,11.42 L17.20,11.87 L17.51,12.38 L17.84,12.96 L18.09,13.58 L18.21,14.21 L18.13,14.79 L17.85,15.28 L17.38,15.64 L16.78,15.85 L16.12,15.94 L15.46,15.95 L14.86,15.94 L14.35,15.97 L13.95,16.11 L13.63,16.39 L13.35,16.81 L13.06,17.33 L12.72,17.90 L12.31,18.44 L11.82,18.85 L11.28,19.07 L10.72,19.07 L10.18,18.85 L9.69,18.44 L9.28,17.90 L8.94,17.33 L8.65,16.81 L8.37,16.39 L8.05,16.11 L7.65,15.97 L7.14,15.94 L6.54,15.95 L5.88,15.94 L5.22,15.85 L4.62,15.64 L4.15,15.28 L3.87,14.79 L3.79,14.21 L3.91,13.58 L4.16,12.96 L4.49,12.38 L4.80,11.87 L5.02,11.42 L5.10,11.00 L5.02,10.58 L4.80,10.13 L4.49,9.62 L4.16,9.04 L3.91,8.42 L3.79,7.79 L3.87,7.21 L4.15,6.72 L4.62,6.36 L5.22,6.15 L5.88,6.06 L6.54,6.05 L7.14,6.06 L7.65,6.03 L8.05,5.89 L8.37,5.61 L8.65,5.19 L8.94,4.67 L9.28,4.10 L9.69,3.56 L10.18,3.15 L10.72,2.93 L11.28,2.93 L11.82,3.15 L12.31,3.56 L12.72,4.10 L13.06,4.67 L13.35,5.19 L13.63,5.61 L13.95,5.89 L14.35,6.03 L14.86,6.06 L15.46,6.05 L16.12,6.06 L16.78,6.15 L17.38,6.36 L17.85,6.72 L18.13,7.21 L18.21,7.79 L18.09,8.42 L17.84,9.04 L17.51,9.62 L17.20,10.13 L16.98,10.58 Z" fill="none" stroke="#CED0D6" stroke-width="1.4" stroke-linejoin="round"/><circle cx="11" cy="11" r="2.6" fill="none" stroke="#CED0D6" stroke-width="1.4"/></svg>
<div class="t" style="left:1319px;top:68px;letter-spacing:0.33px;color:#D0D2D7">mysql.properties</div>
<svg style="left:1657px;top:68px" width="5" height="17"><circle cx="2.5" cy="2" r="1.6" fill="#CED0D6"/><circle cx="2.5" cy="8.5" r="1.6" fill="#CED0D6"/><circle cx="2.5" cy="15" r="1.6" fill="#CED0D6"/></svg>
<div class="r" style="left:623px;top:212px;width:1059px;height:28px;background:#26282E"></div>
<div class="r" style="left:703px;top:102px;width:1px;height:912px;background:#313438"></div>
<div class="t mono" style="left:609px;width:50px;text-align:right;top:108.8px;font-size:16.67px;color:#4B5059">1</div>
<div class="t mono" style="left:707px;top:108.8px;font-size:16.67px;white-space:pre;width:975px;overflow:hidden"><span style="color:#D5B778">&lt;?</span><span style="color:#BCBEC4">xml version</span><span style="color:#6AAB73">="1.0"</span><span style="color:#BCBEC4"> encoding</span><span style="color:#6AAB73">="UTF-8"</span><span style="color:#D5B778">?&gt;</span></div>
<div class="t mono" style="left:609px;width:50px;text-align:right;top:136.2px;font-size:16.67px;color:#4B5059">2</div>
<div class="t mono" style="left:707px;top:136.2px;font-size:16.67px;white-space:pre;width:975px;overflow:hidden"><span style="color:#D5B778">&lt;beans</span><span style="color:#BCBEC4"> xmlns</span><span style="color:#6AAB73">="http://www.springframework.org/schema/beans"</span></div>
<div class="t mono" style="left:609px;width:50px;text-align:right;top:163.6px;font-size:16.67px;color:#4B5059">3</div>
<div class="t mono" style="left:707px;top:163.6px;font-size:16.67px;white-space:pre;width:975px;overflow:hidden"><span style="color:#BCBEC4">       xmlns:</span><span style="color:#C77DBB">xsi</span><span style="color:#6AAB73">="http://www.w3.org/2001/XMLSchema-instance"</span></div>
<div class="t mono" style="left:609px;width:50px;text-align:right;top:191.0px;font-size:16.67px;color:#4B5059">4</div>
<div class="t mono" style="left:707px;top:191.0px;font-size:16.67px;white-space:pre;width:975px;overflow:hidden"><span style="color:#BCBEC4">       </span><span style="color:#C77DBB">xsi</span><span style="color:#BCBEC4">:schemaLocation</span><span style="color:#6AAB73">="http://www.springframework.org/schema/beans http://www.springframework.org/schema/beans/spring-beans.xsd"</span><span style="color:#D5B778">&gt;</span></div>
<div class="t mono" style="left:609px;width:50px;text-align:right;top:218.4px;font-size:16.67px;color:#A1A3AB">5</div>
<div class="t mono" style="left:609px;width:50px;text-align:right;top:245.8px;font-size:16.67px;color:#4B5059">6</div>
<div class="t mono" style="left:707px;top:245.8px;font-size:16.67px;white-space:pre;width:975px;overflow:hidden"><span style="color:#D5B778">&lt;/beans&gt;</span></div>
<div class="r" style="left:707px;top:215px;width:2px;height:22px;background:#CED0D6"></div>
<svg style="left:665px;top:135px" width="17" height="17"><rect x="1" y="1" width="4" height="4" fill="#A6AFB9"/><rect x="11" y="1" width="5" height="5" fill="#A6AFB9"/><rect x="1" y="11" width="5" height="5" fill="#A6AFB9"/><path d="M6.5,2.8 L10,2.8 M2.8,6.5 L2.8,10" stroke="#7F8790" stroke-width="0.9" stroke-dasharray="1,1"/><path d="M7,13.5 C7,11 9.5,9.8 12,9.2 C14,8.8 15.5,8.6 16,8.5 C16.2,12 15,15 13,16 C10.5,16.8 7,16.5 7,13.5 Z" fill="#5A9E64"/><path d="M9,15 L14,11" stroke="#2E4A33" stroke-width="0.7"/></svg>
<svg style="left:718px;top:185px" width="14" height="20"><path d="M7,1 C3.5,1 1,3.5 1,6.8 C1,9 2.3,10.5 3.5,11.8 L3.8,13 L10.2,13 L10.5,11.8 C11.7,10.5 13,9 13,6.8 C13,3.5 10.5,1 7,1 Z" fill="#F2C55C"/><rect x="4" y="14.2" width="6" height="1.4" fill="#CED0D6"/><rect x="4.5" y="16.6" width="5" height="1.6" rx="0.8" fill="#CED0D6"/></svg>
<svg style="left:1658px;top:113px" width="16" height="13"><path d="M1.5,6.5 L5.8,10.8 L14.5,2" fill="none" stroke="#56A868" stroke-width="2.2"/></svg>
<div class="r" style="left:708px;top:1002px;width:670px;height:10px;background:#48494C"></div>
<div class="r" style="left:623px;top:1014px;width:1059px;height:1px;background:#313438"></div>
<div class="t" style="left:636px;top:1020px;color:#A8ABB0">beans</div>
<div class="r" style="left:1682px;top:51px;width:1px;height:993px;background:#1E1F22"></div>
<!-- bell -->
<svg style="left:1697px;top:64px" width="26" height="26">
  <path d="M14,3.2 Q12.8,2.4 11.2,2.4 C7.5,2.4 4.9,5.2 4.9,9.5 L4.9,13.8 L1.6,18.9 L21.4,18.9 L18.1,13.8 L18.1,11" fill="none" stroke="#CED0D6" stroke-width="1.75" stroke-linejoin="round"/>
  <path d="M8.9,20.8 Q11.4,24.6 13.9,20.8 Z" fill="#CED0D6"/>
  <circle cx="19.5" cy="4.3" r="5.9" fill="#2B2D30"/>
  <circle cx="19.5" cy="4.3" r="4.6" fill="#548AF7"/>
</svg>
<!-- AI spiral -->
<svg style="left:1696px;top:114px" width="26" height="26">
  <path d="M4.6,4.6 C8,3 16,2.5 20,7 C23.5,11 21,16.5 15,17.3 C10.5,17.8 8,15.5 8.4,13.2 C8.8,11.5 11,11 12.6,11.6" fill="none" stroke="#CED0D6" stroke-width="1.7" stroke-linecap="round"/>
  <path d="M20.4,20.4 C17,22 9,22.5 5,18.5 C1.5,15 3,9 8,7.7 C12.5,6.8 16.5,8.5 16.5,11 C16.5,13 14.5,13.8 13.2,13.5" fill="none" stroke="#CED0D6" stroke-width="1.7" stroke-linecap="round"/>
</svg>
<!-- database -->
<svg style="left:1697px;top:164px" width="24" height="26">
  <ellipse cx="11.5" cy="5" rx="9.5" ry="3.8" fill="none" stroke="#CED0D6" stroke-width="1.7"/>
  <path d="M2,5 L2,19.5 C2,21.8 6.3,23.5 11.5,23.5 C16.7,23.5 21,21.8 21,19.5 L21,5" fill="none" stroke="#CED0D6" stroke-width="1.7"/>
  <path d="M2,10 C2,12.3 6.3,14 11.5,14 C16.7,14 21,12.3 21,10 M2,14.8 C2,17.1 6.3,18.8 11.5,18.8 C16.7,18.8 21,17.1 21,14.8" fill="none" stroke="#CED0D6" stroke-width="1.7"/>
</svg>

<div class="r" style="left:0;top:1044px;width:1734px;height:1px;background:#1E1F22"></div>
<div class="r" style="left:19px;top:1058px;width:10px;height:10px;border:1.6px solid #548AF7;border-radius:2.5px;background:#25324D"></div>
<div class="t" style="left:34px;top:1053px;color:#A8ABB0;letter-spacing:-0.1px">Java_ssm</div>
<svg style="left:121px;top:1057px" width="7" height="11"><polyline points="1,1 5.5,5.5 1,10" fill="none" stroke="#A8ABB0" stroke-width="1.5"/></svg>
<div class="t" style="left:139px;top:1053px;color:#A8ABB0;letter-spacing:0.1px">resources</div>
<svg style="left:227px;top:1057px" width="7" height="11"><polyline points="1,1 5.5,5.5 1,10" fill="none" stroke="#A8ABB0" stroke-width="1.5"/></svg>
<svg style="left:245px;top:1055px" width="22" height="20"><path d="M7.5,3.7 L1.5,8.3 L7.5,12.6 M12.8,0.6 L9,15.3 M14.5,3.9 L19.3,7.8" fill="none" stroke="#D98C5F" stroke-width="1.6" stroke-linecap="round" stroke-linejoin="round"/><path d="M10.6,15.2 C10.6,11.8 13.5,10.6 16.5,10.1 C18.6,9.8 20.2,9.2 21,8.8 C21.3,12.5 20.6,16.4 18,17.7 C15.3,18.9 10.6,18.6 10.6,15.2 Z" fill="#5A9E64" stroke="#2B2D30" stroke-width="0.9"/><path d="M13.3,17 L19.2,12.3" stroke="#2E4A33" stroke-width="0.8" stroke-dasharray="1.2,0.8"/></svg>
<div class="t" style="left:271px;top:1053px;color:#A8ABB0;letter-spacing:0.35px">springmvc-config.xml</div>
<div class="t" style="left:1389px;top:1053px;color:#A8ABB0;letter-spacing:-0.6px;transform:scaleX(0.94);transform-origin:0 0">5:1</div>
<div class="t" style="left:1431px;top:1053px;color:#A8ABB0;letter-spacing:-0.3px;transform:scaleX(0.9);transform-origin:0 0">CRLF</div>
<div class="t" style="left:1492px;top:1053px;color:#6F737A;letter-spacing:-0.2px">UTF-8</div>
<svg style="left:1562px;top:1054px" width="19" height="18">
  <path d="M2,10.2 C3.5,6.8 6,5 9.5,5 C13,5 15.5,6.8 17,10.2 C15.5,13.2 13,14.8 9.5,14.8 C6,14.8 3.5,13.2 2,10.2 Z" fill="none" stroke="#CED0D6" stroke-width="1.4"/>
  <circle cx="9.5" cy="10" r="2" fill="none" stroke="#CED0D6" stroke-width="1.2"/>
  <path d="M3.5,3 Q8.5,1 13.5,3 M6,16.5 Q11,18 16,16" fill="none" stroke="#CED0D6" stroke-width="1.3"/>
  <path d="M1.5,17 L17,1.5" stroke="#2B2D30" stroke-width="3"/><path d="M1.5,17 L17,1.5" stroke="#CED0D6" stroke-width="1.3" stroke-linecap="round"/>
</svg>
<div class="t" style="left:1601px;top:1053px;color:#A8ABB0;letter-spacing:0.1px">4 spaces</div>
<svg style="left:1694px;top:1056px" width="18" height="15">
  <rect x="1" y="6" width="11" height="8" rx="1.5" fill="none" stroke="#CED0D6" stroke-width="1.5"/>
  <path d="M10,6 L10,4 C10,2 11.5,0.8 13.5,0.8 C15.5,0.8 17,2 17,4 L17,5.5" fill="none" stroke="#CED0D6" stroke-width="1.5"/>
  <rect x="5.8" y="8.5" width="1.5" height="3" fill="#CED0D6"/>
</svg>
</div>
<svg style="left:0;top:0" width="1734" height="1082"><polygon points="1580,1082 1603.5,1076.3 1607.5,1082" fill="#F26A36"/></svg>
</body></html>
